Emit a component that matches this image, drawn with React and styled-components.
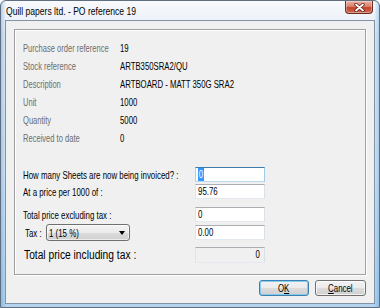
import React from 'react';
import styled, { createGlobalStyle } from 'styled-components';

const Global = createGlobalStyle`
  html, body { margin: 0; padding: 0; background: #ffffff; }
  body { font-family: "Liberation Sans", Arial, sans-serif; }
  * { box-sizing: border-box; }
`;

/* The dialog font is a condensed sans: emulate it by narrowing Liberation Sans */
const Narrow = styled.span`
  display: inline-block;
  white-space: nowrap;
  transform: scaleX(${p => p.$sx || 0.75});
  transform-origin: ${p => p.$origin || 'left'} center;
`;

const Selected = styled(Narrow)`
  background: #3399ff;
  color: #ffffff;
  padding: 0 1px;
`;

const Window = styled.div`
  position: relative;
  width: 380px;
  height: 308px;
  border: 1px solid #5f6f80;
  border-radius: 6px 6px 0 0;
  background:
    linear-gradient(90deg, rgba(60,140,215,0.35) 0px, rgba(255,255,255,0) 5px, rgba(255,255,255,0) 373px, rgba(60,150,220,0.35) 378px),
    linear-gradient(180deg, #f7f9fc 0%, #e4ecf5 12%, #d8e6f3 55%, #b4d3ef 100%);
  display: flex;
  flex-direction: column;
  padding: 0 4px 3px 4px;
`;

const TitleBar = styled.div`
  height: 19px;
  display: flex;
  align-items: center;
  padding-left: 1px;
  font-size: 11.5px;
  color: #000;
`;

const CloseButton = styled.div`
  position: absolute;
  top: 0;
  right: 6px;
  width: 28px;
  height: 13px;
  border: 1px solid #6a2c24;
  border-top: none;
  border-radius: 0 0 4px 4px;
  background: linear-gradient(180deg, #eab1a2 0%, #d9826f 45%, #c4432c 55%, #cf6a4f 100%);
  display: flex;
  align-items: center;
  justify-content: center;
  box-shadow: inset 0 0 0 1px rgba(255,255,255,0.35);
`;

const Client = styled.div`
  flex: 1;
  border: 1px solid #8393a6;
  background: #f0f0f0;
  display: flex;
  flex-direction: column;
  padding: 8px 8px 7px 8px;
`;

const GroupBox = styled.div`
  height: 246px;
  border: 1px solid #a0a0a0;
  box-shadow: inset 1px 1px 0 #ffffff, 1px 1px 0 #ffffff;
  padding: 9px 8px 0 8px;
  display: flex;
  flex-direction: column;
`;

const InfoRow = styled.div`
  height: 18px;
  display: flex;
  align-items: center;
`;

const InfoLabel = styled.div`
  width: 97px;
  font-size: 10.5px;
  color: #6d6d6d;
  white-space: nowrap;
`;

const InfoValue = styled.div`
  font-size: 10.5px;
  color: #000;
  white-space: nowrap;
`;

const EntryRow = styled.div`
  display: flex;
  align-items: center;
  height: ${p => p.$h || 15}px;
  margin-top: ${p => p.$mt || 0}px;
`;

const EntryLabel = styled.div`
  width: ${p => p.$w || 172}px;
  padding-left: ${p => p.$indent || 0}px;
  font-size: ${p => p.$big ? 12.5 : 10.5}px;
  color: #000;
  white-space: nowrap;
`;

const Field = styled.div`
  width: 70px;
  height: ${p => p.$h || 15}px;
  border: 1px solid;
  border-color: ${p => p.$focused
    ? '#3d7bad #a4c9e3 #b7d9ed #b5cfe7'
    : '#abadb3 #dbdfe6 #e3e9ef #e2e3ea'};
  background: ${p => p.$readOnly ? '#f0f0f0' : '#ffffff'};
  font-size: 10.5px;
  line-height: 13px;
  color: #000;
  padding: 0 ${p => p.$readOnly ? 4 : 2}px;
  text-align: ${p => p.$readOnly ? 'right' : 'left'};
  white-space: nowrap;
  overflow: hidden;
`;

const Combo = styled.div`
  width: 84px;
  height: 17px;
  margin-right: ${p => p.$mr}px;
  border: 1px solid #707070;
  border-radius: 3px;
  background: linear-gradient(180deg, #f3f3f3 0%, #ebebeb 50%, #dddddd 50%, #cfcfcf 100%);
  box-shadow: inset 0 0 0 1px rgba(255,255,255,0.6);
  display: flex;
  align-items: center;
  justify-content: space-between;
  padding: 0 4px 0 2px;
  font-size: 10.5px;
  color: #000;
`;

const Arrow = styled.span`
  width: 0;
  height: 0;
  border-left: 3.5px solid transparent;
  border-right: 3.5px solid transparent;
  border-top: 4px solid #000;
`;

const ButtonRow = styled.div`
  display: flex;
  justify-content: flex-end;
  gap: 6px;
  margin-top: 5px;
`;

const Button = styled.div`
  width: ${p => p.$w}px;
  height: 16px;
  border: 1px solid ${p => p.$default ? '#3c7fb1' : '#707070'};
  border-radius: 3px;
  background: linear-gradient(180deg, #f2f2f2 0%, #ebebeb 50%, #dddddd 50%, #cfcfcf 100%);
  box-shadow: inset 0 0 0 1px ${p => p.$default ? 'rgba(120,200,240,0.9)' : 'rgba(255,255,255,0.7)'};
  display: flex;
  align-items: center;
  justify-content: center;
  font-size: 10.5px;
  color: #000;
`;

const U = styled.span`
  text-decoration: underline;
`;

const info = [
  ['Purchase order reference', '19'],
  ['Stock reference', 'ARTB350SRA2/QU'],
  ['Description', 'ARTBOARD - MATT 350G SRA2'],
  ['Unit', '1000'],
  ['Quantity', '5000'],
  ['Received to date', '0'],
];

export default function App() {
  return (
    <>
      <Global />
      <Window>
        <TitleBar><Narrow $sx={0.745}>Quill papers ltd. - PO reference 19</Narrow></TitleBar>
        <CloseButton>
          <svg width="11" height="9" viewBox="0 0 11 9">
            <path d="M2 1.5 L9 7.5 M9 1.5 L2 7.5" stroke="#5a2018" strokeWidth="3.4" strokeLinecap="round" />
            <path d="M2 1.5 L9 7.5 M9 1.5 L2 7.5" stroke="#ffffff" strokeWidth="1.8" strokeLinecap="round" />
          </svg>
        </CloseButton>
        <Client>
          <GroupBox>
            {info.map(([l, v]) => (
              <InfoRow key={l}>
                <InfoLabel><Narrow $sx={0.72}>{l}</Narrow></InfoLabel>
                <InfoValue><Narrow $sx={0.74}>{v}</Narrow></InfoValue>
              </InfoRow>
            ))}
            <EntryRow $mt={20}>
              <EntryLabel><Narrow>How many Sheets are now being invoiced? :</Narrow></EntryLabel>
              <Field $focused><Selected>0</Selected></Field>
            </EntryRow>
            <EntryRow $mt={2}>
              <EntryLabel><Narrow>At a price per 1000 of :</Narrow></EntryLabel>
              <Field><Narrow>95.76</Narrow></Field>
            </EntryRow>
            <EntryRow $mt={8}>
              <EntryLabel><Narrow>Total price excluding tax :</Narrow></EntryLabel>
              <Field><Narrow>0</Narrow></Field>
            </EntryRow>
            <EntryRow $mt={2} $h={17}>
              <EntryLabel $w={23} $indent={2}><Narrow>Tax :</Narrow></EntryLabel>
              <Combo $mr={65}>
                <Narrow>1 (15 %)</Narrow>
                <Arrow />
              </Combo>
              <Field><Narrow>0.00</Narrow></Field>
            </EntryRow>
            <EntryRow $mt={6} $h={16}>
              <EntryLabel $big $indent={1}><Narrow $sx={0.82}>Total price including tax :</Narrow></EntryLabel>
              <Field $readOnly $h={16}><Narrow $origin="right">0</Narrow></Field>
            </EntryRow>
          </GroupBox>
          <ButtonRow>
            <Button $w={50} $default><Narrow $origin="center">O<U>K</U></Narrow></Button>
            <Button $w={51}><Narrow $origin="center"><U>C</U>ancel</Narrow></Button>
          </ButtonRow>
        </Client>
      </Window>
    </>
  );
}
